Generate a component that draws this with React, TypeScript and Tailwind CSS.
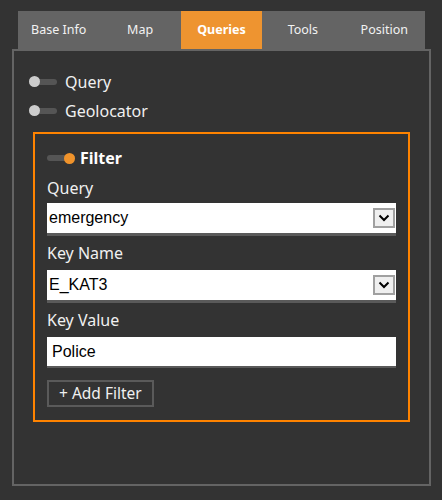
import { useState } from 'react';

const tabs = ['Base Info', 'Map', 'Queries', 'Tools', 'Position'];

function Toggle({ on }: { on?: boolean }) {
  return (
    <span className="relative flex h-[11px] w-[28px] shrink-0 items-center">
      <span className="h-[6px] w-full rounded-full bg-[#555555]" />
      <span
        className={
          on
            ? 'absolute right-0 h-[11px] w-[11px] rounded-full bg-[#f0932b]'
            : 'absolute left-0 h-[11px] w-[11px] rounded-full bg-[#cccccc]'
        }
      />
    </span>
  );
}

function Chevron() {
  return (
    <svg width="12" height="8" viewBox="0 0 12 8" fill="none">
      <path d="M1.5 1.5 L6 6 L10.5 1.5" stroke="#000" strokeWidth="2" />
    </svg>
  );
}

function Select({ value }: { value: string }) {
  return (
    <div className="flex h-[33px] items-center border-b-[3px] border-[#5a5a5a] bg-white pl-[2px] pr-[1px]">
      <span className="flex-1 font-['Liberation_Sans',Arial,sans-serif] text-[16px] text-black">{value}</span>
      <span className="flex h-[20px] w-[22px] items-center justify-center border-2 border-[#a0a0a0] bg-[#efefef]">
        <Chevron />
      </span>
    </div>
  );
}

function Label({ children }: { children: string }) {
  return <div className="flex h-[34px] items-center text-[16px] text-[#f0f0f0]">{children}</div>;
}

export default function App() {
  const [active] = useState('Queries');
  return (
    <div className="min-h-[500px] bg-[#333333] pt-[11px] font-['Noto_Sans','Open_Sans',sans-serif]">
      <div className="ml-[12px] w-[419px]">
        <div className="mx-[6px] grid h-[38px] grid-cols-5 bg-[#646464]">
          {tabs.map((t) => (
            <div
              key={t}
              className={
                t === active
                  ? 'flex items-center justify-center bg-[#ee9430] text-[12.5px] font-bold text-white'
                  : 'flex items-center justify-center text-[12.5px] text-[#f2f2f2]'
              }
            >
              {t}
            </div>
          ))}
        </div>
        <div className="h-[437px] border-2 border-[#646464] px-[19px] pt-[16px]">
          <div className="-ml-[4px] flex h-[29px] items-center gap-[8px] text-[16px] text-[#f0f0f0]">
            <Toggle />
            <span>Query</span>
          </div>
          <div className="-ml-[4px] flex h-[29px] items-center gap-[8px] text-[16px] text-[#f0f0f0]">
            <Toggle />
            <span>Geolocator</span>
          </div>
          <div className="mt-[7px] border-2 border-[#ff8300] px-[12px] pt-[9px] pb-[13px]">
            <div className="flex h-[30px] items-center gap-[5px] text-[16px] font-bold text-white">
              <Toggle on />
              <span>Filter</span>
            </div>
            <div className="flex h-[30px] items-center text-[16px] text-[#f0f0f0]">Query</div>
            <Select value="emergency" />
            <Label>Key Name</Label>
            <Select value="E_KAT3" />
            <Label>Key Value</Label>
            <div className="flex h-[31px] items-center border-b-[2px] border-[#5a5a5a] bg-white pl-[5px] font-['Liberation_Sans',Arial,sans-serif] text-[16px] text-black">
              Police
            </div>
            <button className="mt-[12px] flex h-[27px] items-center border-2 border-[#5a5a5a] px-[10px] text-[15.5px] text-[#f0f0f0]">
              + Add Filter
            </button>
          </div>
        </div>
      </div>
    </div>
  );
}
